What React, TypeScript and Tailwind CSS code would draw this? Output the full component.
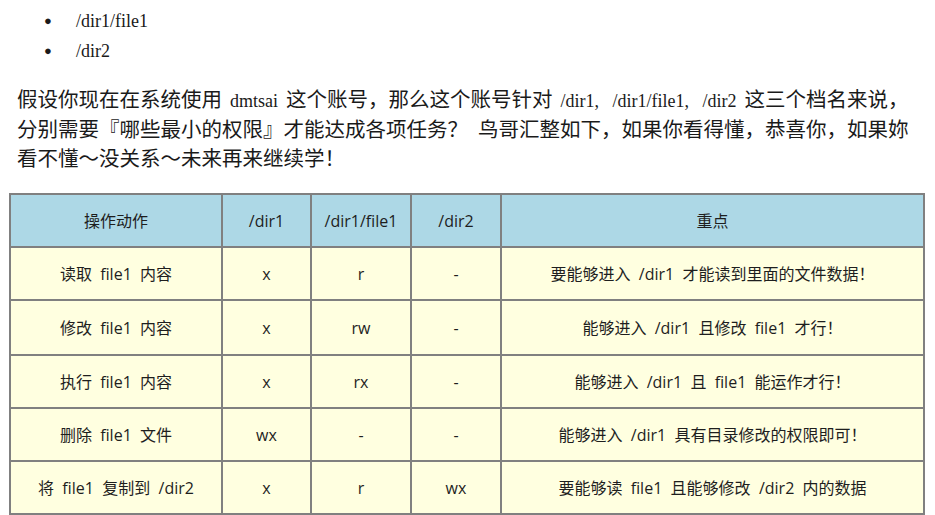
const serif = "font-['Liberation_Serif','Noto_Sans_CJK_SC',serif]"

const rows = [
  { action: '读取  file1  内容', d1: 'x', f1: 'r', d2: '-', note: '要能够进入  /dir1  才能读到里面的文件数据！', h: 'h-[53px]' },
  { action: '修改  file1  内容', d1: 'x', f1: 'rw', d2: '-', note: '能够进入  /dir1  且修改  file1  才行！', h: 'h-[55px]' },
  { action: '执行  file1  内容', d1: 'x', f1: 'rx', d2: '-', note: '能够进入  /dir1  且  file1  能运作才行！', h: 'h-[53px]' },
  { action: '删除  file1  文件', d1: 'wx', f1: '-', d2: '-', note: '能够进入  /dir1  具有目录修改的权限即可！', h: 'h-[53px]' },
  { action: '将  file1  复制到  /dir2', d1: 'x', f1: 'r', d2: 'wx', note: '要能够读  file1  且能够修改  /dir2  内的数据', h: 'h-[53px]' },
]

const cell = 'border-2 border-[#808080] text-center align-middle whitespace-pre'

export default function App() {
  return (
    <div className={`w-[935px] h-[515px] overflow-hidden bg-white text-[#1a1a1a] ${serif}`}>
      <ul className="pt-[6px] pl-[44px] text-[18px] leading-[30px]">
        <li className="flex items-center">
          <span className="w-[32px] text-[13px]">●</span>/dir1/file1
        </li>
        <li className="flex items-center">
          <span className="w-[32px] text-[13px]">●</span>/dir2
        </li>
      </ul>

      <p className="mt-[20px] px-[17px] text-[20.5px] leading-[29px] whitespace-pre">
        假设你现在在系统使用<span className="mx-[8px] text-[18px]">dmtsai</span>这个账号，那么这个账号针对
        <span className="mx-[8px] text-[18px] [word-spacing:9px]">/dir1, /dir1/file1, /dir2</span>这三个档名来说，
        <br />
        分别需要『哪些最小的权限』才能达成各项任务？<span className="mx-[5px]" />鸟哥汇整如下，如果你看得懂，恭喜你，如果妳
        <br />
        看不懂～没关系～未来再来继续学！
      </p>

      <table className="mt-[19px] ml-[9px] w-[916px] border-collapse table-fixed font-['Open_Sans','Noto_Sans_CJK_SC',sans-serif] text-[16px] text-[#1e1e1e]">
        <colgroup>
          <col className="w-[212px]" />
          <col className="w-[89px]" />
          <col className="w-[100px]" />
          <col className="w-[90px]" />
          <col />
        </colgroup>
        <thead>
          <tr className="h-[53px] bg-[#add8e6]">
            <th className={`${cell} font-normal`}>操作动作</th>
            <th className={`${cell} font-normal`}>/dir1</th>
            <th className={`${cell} font-normal`}>/dir1/file1</th>
            <th className={`${cell} font-normal`}>/dir2</th>
            <th className={`${cell} font-normal`}>重点</th>
          </tr>
        </thead>
        <tbody>
          {rows.map((r) => (
            <tr key={r.action} className={`${r.h} bg-[#ffffe0]`}>
              <td className={cell}>{r.action}</td>
              <td className={cell}>{r.d1}</td>
              <td className={cell}>{r.f1}</td>
              <td className={cell}>{r.d2}</td>
              <td className={cell}>{r.note}</td>
            </tr>
          ))}
        </tbody>
      </table>
    </div>
  )
}
